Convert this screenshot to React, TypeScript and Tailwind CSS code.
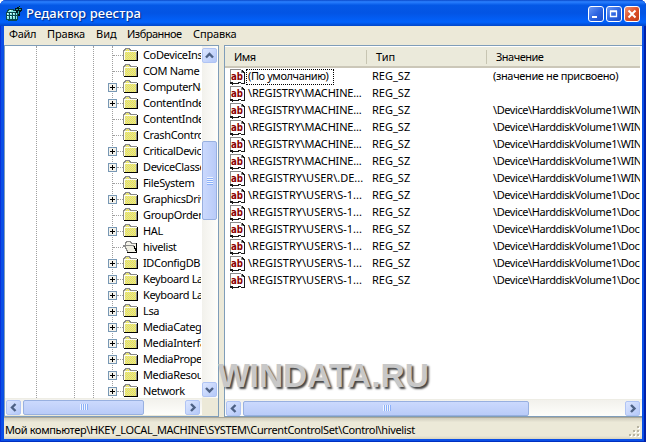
import React from "react";

const tree: [string, boolean][] = [
  ["CoDeviceInst", false],
  ["COM Name Ar", false],
  ["ComputerNam", true],
  ["ContentIndex", true],
  ["ContentIndex", false],
  ["CrashControl", false],
  ["CriticalDevice", true],
  ["DeviceClasses", true],
  ["FileSystem", false],
  ["GraphicsDriver", true],
  ["GroupOrderL", false],
  ["HAL", true],
  ["hivelist", false],
  ["IDConfigDB", true],
  ["Keyboard Lay", true],
  ["Keyboard Lay", true],
  ["Lsa", true],
  ["MediaCatego", true],
  ["MediaInterfac", true],
  ["MediaPropert", true],
  ["MediaResour", true],
  ["Network", true],
];

const WIN = "\\Device\\HarddiskVolume1\\WIND";
const DOC = "\\Device\\HarddiskVolume1\\Docum";
const rows: [string, string][] = [
  ["(По умолчанию)", "(значение не присвоено)"],
  ["\\REGISTRY\\MACHINE...", ""],
  ["\\REGISTRY\\MACHINE...", WIN],
  ["\\REGISTRY\\MACHINE...", WIN],
  ["\\REGISTRY\\MACHINE...", WIN],
  ["\\REGISTRY\\MACHINE...", WIN],
  ["\\REGISTRY\\USER\\.DE...", WIN],
  ["\\REGISTRY\\USER\\S-1...", DOC],
  ["\\REGISTRY\\USER\\S-1...", DOC],
  ["\\REGISTRY\\USER\\S-1...", DOC],
  ["\\REGISTRY\\USER\\S-1...", DOC],
  ["\\REGISTRY\\USER\\S-1...", DOC],
  ["\\REGISTRY\\USER\\S-1...", DOC],
];

function AppIcon() {
  return (
    <svg width="16" height="16" viewBox="0 0 16 16" shapeRendering="crispEdges" className="shrink-0">
      <path d="M2 3h6v1h3v3h1v7h-1v1H2v-1H0V6h1V4h1z" fill="#0a4a50" />
      <path d="M3 4h4v2H2V5h1zM7 5h3v1H7zM1 7h2v2H1zM4 7h2v2H4zM7 7h2v2H7zM1 10h2v3H1zM4 10h2v3H4zM7 10h2v3H7zM10 7h1v2h-1zM10 10h1v3h-1z" fill="#8be6e0" />
      <path d="M1 7h1v1H1zM4 7h1v1H4zM7 7h1v1H7zM1 10h1v1H1zM4 10h1v1H4zM7 10h1v1H7zM4 4h1v1H4z" fill="#f0ffff" />
      <path d="M9 2h2V1h2V0h1v2h2v3h-1v1h-1v4h-2V7h-2V5H9z" fill="#03181c" />
      <path d="M10 3h2v1h-2zM13 1h1v1h-1zM13 3h2v1h-2zM12 5h1v3h-1z" fill="#2fa8a4" />
    </svg>
  );
}

function Folder({ open }: { open?: boolean }) {
  if (open)
    return (
      <svg width="16" height="14" viewBox="0 0 16 14" shapeRendering="crispEdges" className="shrink-0">
        <path d="M3 6V2h1V1h4v1h1v1h4v9H5z" fill="#f4f3ea" />
        <path d="M2.500 5.500v-3h1v-1h4v1h1v1h4.500" fill="none" stroke="#8a8a8a" />
        <path d="M.5 5.500h10v1h1v2h1v2h1v2H4.500v-2h-1v-2h-1v-2h-2z" fill="#efeee2" stroke="#8a8a8a" />
        <path d="M13 3h1v10H4v-1h9v-1h-1V9h-1V6h1v2h1z" fill="#000" />
      </svg>
    );
  return (
    <svg width="16" height="14" viewBox="0 0 16 14" shapeRendering="crispEdges" className="shrink-0">
      <defs>
        <pattern id="dither" width="2" height="2" patternUnits="userSpaceOnUse">
          <rect width="2" height="2" fill="#f2ee40" />
          <path d="M0 0h1v1H0zM1 1h1v1H1z" fill="#dcd9b0" />
        </pattern>
      </defs>
      <path d="M1 2h1V1h5v1h1v1h6v9H1z" fill="url(#dither)" />
      <path d="M.5 12V2.500h1v-1h1v-1h4v1h1v1h6V12" fill="none" stroke="#8a8a8a" />
      <path d="M1.500 12V3.500h12" fill="none" stroke="#fffff0" />
      <path d="M1 12h13V3h1v10H1z" fill="#000" />
    </svg>
  );
}

function Plus() {
  return (
    <svg width="9" height="9" viewBox="0 0 9 9" shapeRendering="crispEdges" className="shrink-0">
      <rect x=".5" y=".5" width="8" height="8" fill="#f3f2ec" stroke="#7898b5" />
      <path d="M2 4h5v1H2zM4 2h1v5H4z" fill="#000" />
    </svg>
  );
}

function ValueIcon() {
  return (
    <svg width="17" height="16" viewBox="0 0 17 16" className="shrink-0">
      <g shapeRendering="crispEdges">
        <path d="M1 0h11l3 3v11h-3v-1H9v1H7v1H4v-1H1z" fill="#fff" />
        <path d="M1.500 14V.5H12M12.500 1v2.500H15" fill="none" stroke="#8c8c8c" />
        <path d="M13 1h1v1h1v1h1v12h-4v-1h3V4h-1V3h-1zM1 13h3v1h3v1H4v1H3v-1H1zM7 14h2v-1h3v1h-2v1H7z" fill="#1a1a1a" />
      </g>
      <text x="2" y="10.500" fontSize="10" fontWeight="bold" fontFamily="DejaVu Sans, sans-serif" fill="#8b0000" textLength="12" lengthAdjust="spacingAndGlyphs">ab</text>
    </svg>
  );
}

function ArrowButton({ dir }: { dir: "up" | "down" | "left" | "right" }) {
  const d = {
    up: "M4 9.500 7.500 6 11 9.500",
    down: "M4 6 7.500 9.500 11 6",
    left: "M9.500 4 6 7.500 9.500 11",
    right: "M6 4 9.500 7.500 6 11",
  }[dir];
  return (
    <div className="h-[15px] w-[15px] shrink-0 rounded-[2px] border border-[#b0c4f4] bg-linear-to-br from-[#dce6ff] to-[#b4c8f8]">
      <svg width="13" height="13" viewBox="1 1 13 13">
        <path d={d} fill="none" stroke="#4d6185" strokeWidth="2.400" />
      </svg>
    </div>
  );
}

function HScroll({ thumb }: { thumb: string }) {
  return (
    <div className="flex h-[17px] items-center border-t border-[#eeede5] bg-linear-to-b from-[#f2f1ec] to-[#fefefb] pr-[2px] pl-px">
      <ArrowButton dir="left" />
      <div className={"ml-[2px] flex h-[15px] shrink-0 items-center justify-center gap-px rounded-[2px] border border-[#98b0e0] bg-linear-to-b from-[#cbd9fd] to-[#b9cbf8] " + thumb}>
        {[0, 1, 2, 3].map((i) => (
          <div key={i} className="h-[6px] w-px bg-[#eef4fe] shadow-[1px_0_0_#8cb0f8]" />
        ))}
      </div>
      <div className="grow" />
      <ArrowButton dir="right" />
    </div>
  );
}

function CaptionButton({ kind }: { kind: "min" | "max" | "close" }) {
  const close = kind === "close";
  return (
    <div className={"h-4 w-4 rounded-[3px] border border-white " + (close ? "bg-linear-to-br from-[#ee9070] via-[#dd4f28] to-[#c33c14]" : "bg-linear-to-br from-[#6c98f4] via-[#2f66e2] to-[#1c4cc8]")}>
      <svg width="14" height="14" viewBox="0 0 14 14">
        {kind === "min" && <path d="M3 9h5v2H3z" fill="#fff" />}
        {kind === "max" && <path d="M3.500 4.500h6v5h-6zM3 4h7" fill="none" stroke="#fff" strokeWidth="1.300" />}
        {close && <path d="m3.500 3.500 7 7m0-7-7 7" stroke="#fff" strokeWidth="2" />}
      </svg>
    </div>
  );
}

function SizeGrip() {
  return (
    <svg width="12" height="12" viewBox="0 0 12 12" shapeRendering="crispEdges" className="mt-auto mr-[1px] mb-[1px] ml-auto shrink-0">
      {[[8, 0], [8, 4], [4, 4], [8, 8], [4, 8], [0, 8]].map(([x, y]) => (
        <g key={x + "-" + y}>
          <rect x={x + 1} y={y + 1} width="2" height="2" fill="#fff" />
          <rect x={x} y={y} width="2" height="2" fill="#b8b4a2" />
        </g>
      ))}
    </svg>
  );
}

export default function App() {
  return (
    <div className="relative h-[442px] w-[646px] overflow-hidden bg-white font-['Noto_Sans',sans-serif] text-[11px] whitespace-nowrap text-black">
      <div className="flex h-full flex-col rounded-t-[6px] bg-[#0a4fe6] shadow-[inset_1px_0_0_#0831d9,inset_-2px_0_0_#0020a8,inset_0_-1px_0_#0030c0]">
        <div className="flex h-[26px] shrink-0 items-center rounded-t-[6px] bg-[linear-gradient(#0a48c8_0%,#2a80ff_7%,#0458e6_20%,#0354e4_50%,#0262fc_85%,#0246c8_100%)] pt-[2px] pr-[6px] pl-[6px]">
          <AppIcon />
          <span className="ml-1 text-[13px] font-medium tracking-[0.090px] text-white [text-shadow:1px_1px_1px_#0a2a80]">Редактор реестра</span>
          <div className="ml-auto flex gap-[2px]">
            <CaptionButton kind="min" />
            <CaptionButton kind="max" />
            <CaptionButton kind="close" />
          </div>
        </div>
        <div className="mx-1 mb-[3px] flex min-h-0 grow flex-col bg-[#ece9d8]">
          <div className="flex h-[19px] shrink-0 items-center pb-[2px] pl-[5px] tracking-[-0.350px]">
            <span className="w-[38px]">Файл</span>
            <span className="w-[49px] tracking-[-0.150px]">Правка</span>
            <span className="w-[31px] tracking-normal">Вид</span>
            <span className="w-[66px] tracking-[-0.500px]">Избранное</span>
            <span className="tracking-[-0.150px]">Справка</span>
          </div>
          <div className="flex h-[372px] shrink-0">
            <div className="flex w-[215px] shrink-0 flex-col border border-[#7f9db9] bg-white">
              <div className="flex h-[352px] shrink-0">
                <div className="relative w-[196px] mr-px shrink-0 overflow-hidden pt-px">
                  <div className="absolute top-0 left-[31px] h-full border-l border-dotted border-[#a0a0a0]" />
                  <div className="absolute top-0 left-[69px] h-full border-l border-dotted border-[#a0a0a0]" />
                  <div className="absolute top-0 left-[88px] h-full border-l border-dotted border-[#a0a0a0]" />
                  <div className="absolute top-0 left-[107px] h-full border-l border-dotted border-[#a0a0a0]" />
                  {tree.map(([name, plus], i) => (
                    <div key={i} className="relative flex h-4 items-center pl-[103px]">
                      {plus ? <Plus /> : <div className="w-[9px] shrink-0" />}
                      <div className={"h-px shrink-0 border-t border-dotted border-[#a0a0a0] " + (plus ? "w-[6px]" : "-ml-1 w-[10px]")} />
                      <Folder open={name === "hivelist"} />
                      <span className="ml-[4px] tracking-[-0.360px]">{name}</span>
                    </div>
                  ))}
                </div>
                <div className="flex w-4 shrink-0 flex-col bg-linear-to-r from-[#f2f1ec] to-[#fefefb] pt-[2px] pb-px">
                  <ArrowButton dir="up" />
                  <div className="mt-[78px] flex h-[79px] w-[15px] flex-col items-center justify-center gap-px rounded-[2px] border border-[#98b0e0] bg-linear-to-r from-[#cbd9fd] to-[#b9cbf8]">
                    {[0, 1, 2, 3].map((i) => (
                      <div key={i} className="h-px w-[6px] bg-[#eef4fe] shadow-[0_1px_0_#8cb0f8]" />
                    ))}
                  </div>
                  <div className="grow" />
                  <ArrowButton dir="down" />
                </div>
              </div>
              <div className="flex grow bg-[#ece9d8]">
                <div className="w-[197px]"><HScroll thumb="w-[121px]" /></div>
              </div>
            </div>
            <div className="w-[5px] shrink-0" />
            <div className="flex w-[418px] shrink-0 flex-col border border-r-0 border-[#7f9db9] bg-white">
              <div className="mr-[2px] flex h-[22px] shrink-0 items-center border-t border-b-2 border-t-white border-b-[#cbc7b8] bg-[#ebeadb] pt-px tracking-[-0.500px]">
                <span className="w-[141px] pl-[9px]">Имя</span>
                <span className="flex h-[14px] w-[120px] items-center border-l border-[#c7c5b2] pl-[9px] tracking-normal">Тип</span>
                <span className="flex h-[14px] items-center border-l border-[#c7c5b2] pl-[9px]">Значение</span>
              </div>
              <div className="mr-[2px] h-[331px] shrink-0 overflow-hidden">
                {rows.map(([name, value], i) => (
                  <div key={i} className="flex h-[17px] items-center overflow-hidden pl-[4px]">
                    <ValueIcon />
                    <div className="w-[126px] shrink-0">
                      {i === 0 ? (
                        <span className="flex h-4 w-[88px] items-center border border-dotted border-black pl-px tracking-[-0.400px]">{name}</span>
                      ) : (
                        <span className={"pl-[2px] " + (i < 6 ? "tracking-[-0.170px]" : "tracking-normal")}>{name}</span>
                      )}
                    </div>
                    <span className="w-[121px] shrink-0">REG_SZ</span>
                    <span className={i === 0 ? "tracking-[-0.350px]" : "tracking-[-0.420px]"}>{value}</span>
                  </div>
                ))}
              </div>
              <HScroll thumb="w-[286px]" />
            </div>
          </div>
          <div className="flex grow items-center border-t border-[#aca899] bg-[linear-gradient(#d0cdbd_0%,#ece9d8_20%,#ece9d8_85%,#d8d4c0_100%)] pl-px">
            <span className="pt-[3px] tracking-[-0.360px]">Мой компьютер\HKEY_LOCAL_MACHINE\SYSTEM\CurrentControlSet\Control\hivelist</span>
            <SizeGrip />
          </div>
        </div>
      </div>
      <div className="absolute top-[355px] left-[218px] font-['Liberation_Sans',sans-serif] text-[33.500px] leading-[42px] font-bold text-[#c8c8c8] [text-shadow:2px_2px_2px_#444]">WINDATA.RU</div>
    </div>
  );
}
